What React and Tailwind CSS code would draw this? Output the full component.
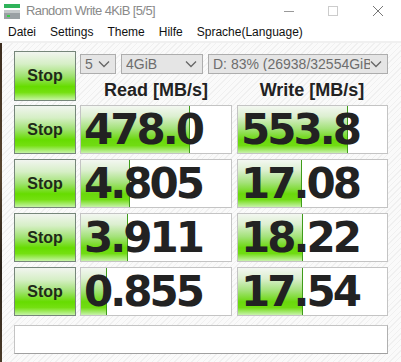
import React from 'react';

const rows = [
  { read: '478.0', readFill: 109, write: '553.8', writeFill: 110 },
  { read: '4.805', readFill: 49, write: '17.08', writeFill: 64 },
  { read: '3.911', readFill: 47, write: '18.22', writeFill: 65 },
  { read: '0.855', readFill: 26, write: '17.54', writeFill: 65 },
];

const Chevron = () => (
  <svg width="12" height="8" viewBox="0 0 12 8" className="shrink-0">
    <path d="M1 1.5 L6 6.5 L11 1.5" fill="none" stroke="#666" strokeWidth="1.3" />
  </svg>
);

const Select = ({ value, className }) => (
  <div className={`h-[20px] flex items-center justify-between pl-[4px] pr-[5px] bg-[#e5e5e5] border border-[#adadad] overflow-hidden ${className}`}>
    <span className="min-w-0 text-[14px] leading-none text-[#6d6d6d] whitespace-nowrap overflow-hidden font-['Liberation_Sans',Arial,sans-serif]">{value}</span>
    <Chevron />
  </div>
);

const StopButton = ({ h }) => (
  <div className={`w-[62px] ${h} shrink-0 flex items-center justify-center border border-[#76867a] bg-[linear-gradient(to_bottom,#f1f5ef_0%,#d6efc6_25%,#9fe270_50%,#66dc00_72%,#74e010_84%,#c6f4a6_100%)]`}>
    <span className="text-[16px] font-bold text-[#1f2a18] font-['Liberation_Sans',Arial,sans-serif] leading-none">Stop</span>
  </div>
);

const ValueBox = ({ value, fill, className }) => (
  <div className={`relative h-full bg-white border border-[#c4c4c4] flex items-center overflow-hidden ${className}`}>
    <div
      className="absolute left-0 top-0 bottom-0 border-r border-[#3f9c1a] bg-[linear-gradient(to_bottom,#f3f7f1_0%,#dcefd0_22%,#a4e27a_48%,#6ad80c_72%,#70dc12_84%,#c8f2ac_100%)]"
      style={{ width: fill }}
    />
    <span className="relative pl-[3px] pt-[1px] text-[42px] font-bold leading-none tracking-[-3px] text-[#222222] font-['DejaVu_Sans',Verdana,sans-serif]">
      {value}
    </span>
  </div>
);

const App = () => (
  <div className="w-[401px] h-[362px] bg-white flex flex-col overflow-hidden font-['Liberation_Sans',Arial,sans-serif]">
    <div className="h-[22px] flex items-center shrink-0">
      <svg width="16" height="16" viewBox="0 0 16 16" className="ml-[4px]">
        <rect x="0" y="1" width="16" height="4" fill="#2fb35a" />
        <rect x="0" y="7" width="16" height="9" fill="#9aa0a4" />
        <rect x="0" y="7" width="16" height="3" fill="#c4c8ca" />
        <rect x="3" y="12" width="3" height="2" fill="#3ccf4a" />
      </svg>
      <span className="ml-[6px] text-[13px] tracking-[-0.6px] text-[#8a8a8a]">Random Write 4KiB [5/5]</span>
      <div className="ml-auto flex items-center">
        <div className="w-[10px] h-px bg-[#999999]" />
        <div className="ml-[34px] w-[10px] h-[10px] border border-[#cccccc]" />
        <svg width="12" height="12" viewBox="0 0 12 12" className="ml-[34px] mr-[17px]">
          <path d="M1 1 L11 11 M11 1 L1 11" stroke="#777" strokeWidth="1" />
        </svg>
      </div>
    </div>
    <div className="h-[21px] shrink-0 flex items-center pl-[8px] gap-[14px] text-[12px] text-[#111111] border-b-2 border-[#f0f0f0]">
      <span>Datei</span>
      <span>Settings</span>
      <span>Theme</span>
      <span>Hilfe</span>
      <span>Sprache(Language)</span>
    </div>
    <div className="flex-1 flex">
      <div className="w-[2px] bg-[linear-gradient(to_bottom,#3b2c1e,#5a4630_40%,#2a2219_70%,#4a3a28)]" />
      <div className="flex-1 pl-[12px] pt-[8px] bg-[repeating-linear-gradient(135deg,#fafafa_0px,#fafafa_3px,#f0f0f0_3px,#f0f0f0_4px)]">
        <div className="flex h-[50px]">
          <StopButton h="h-[50px]" />
          <div className="ml-[4px] flex flex-col">
            <div className="flex mt-[3px]">
              <Select value="5" className="w-[36px]" />
              <Select value="4GiB" className="w-[82px] ml-[5px]" />
              <Select value="D: 83% (26938/32554GiB" className="w-[180px] ml-[5px]" />
            </div>
            <div className="flex mt-[7px] text-[18px] font-bold text-[#222222] leading-none">
              <div className="w-[152px] text-center">Read [MB/s]</div>
              <div className="w-[150px] ml-[5px] text-center">Write [MB/s]</div>
            </div>
          </div>
        </div>
        <div className="mt-[4px] flex flex-col gap-[5px]">
          {rows.map((r) => (
            <div key={r.read} className="flex h-[49px]">
              <StopButton h="h-[49px]" />
              <ValueBox value={r.read} fill={r.readFill} className="w-[152px] ml-[4px]" />
              <ValueBox value={r.write} fill={r.writeFill} className="w-[151px] ml-[5px]" />
            </div>
          ))}
        </div>
        <div className="mt-[9px] w-[374px] h-[29px] bg-white border border-[#c4c4c4] border-b-[#a0a0a0] border-r-[#b0b0b0]" />
      </div>
    </div>
  </div>
);

export default App;
